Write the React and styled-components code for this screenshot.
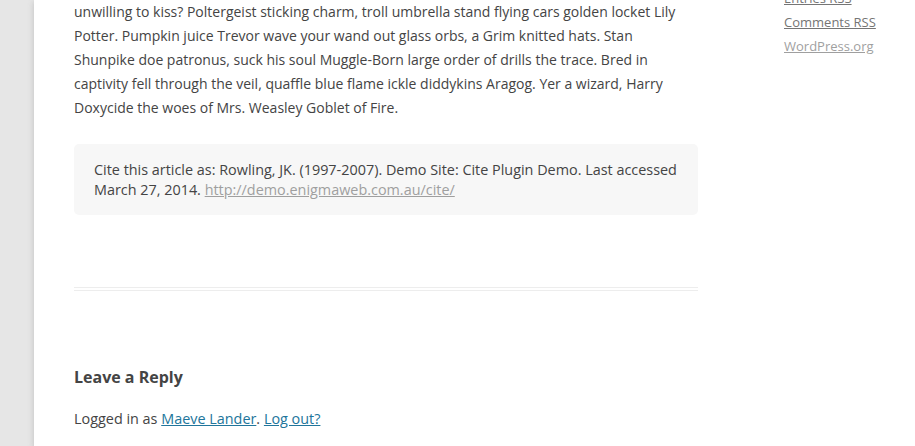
import styled, { createGlobalStyle } from "styled-components";

const Global = createGlobalStyle`
  html, body {
    margin: 0;
    padding: 0;
    background: #e6e6e6;
    overflow: hidden;
  }
  body {
    font-family: "Open Sans", "Liberation Sans", sans-serif;
    color: #444;
    -webkit-font-smoothing: antialiased;
  }
`;

const Site = styled.div`
  margin-left: 34px;
  min-height: 100vh;
  width: 1000px;
  background: #fff;
  box-shadow: 0 2px 6px rgba(100, 100, 100, 0.3);
  padding: 0 40px;
  display: flex;
  gap: 86px;
  box-sizing: border-box;
`;

const Main = styled.main`
  width: 624px;
  flex: none;
`;

const Article = styled.article`
  border-bottom: 4px double #ededed;
  padding-bottom: 72px;
`;

const Para = styled.p`
  margin: 0 0 24px;
  font-size: 14px;
  line-height: 24px;
  white-space: nowrap;
`;

const Cite = styled.div`
  background: #f7f7f7;
  border-radius: 5px;
  padding: 16px 18px 15px 20px;
  font-size: 14.4px;
  line-height: 20px;
  color: #444;

  a {
    color: #9f9f9f;
  }
`;

const Reply = styled.section`
  padding-top: 74px;
`;

const ReplyTitle = styled.h3`
  margin: 0 0 18px;
  font-size: 16px;
  line-height: 24px;
  font-weight: 700;
  color: #444;
`;

const Logged = styled.p`
  margin: 0;
  font-size: 14.4px;
  line-height: 24px;

  a {
    color: #21759b;
  }
`;

const Sidebar = styled.aside`
  width: 160px;
  flex: none;
  margin-top: -14px;
`;

const WidgetList = styled.ul`
  list-style: none;
  margin: 0;
  padding: 0;
  font-size: 13px;
  line-height: 24px;
`;

const WidgetLink = styled.a`
  color: ${(p) => (p.$visited ? "#9f9f9f" : "#757575")};
  text-decoration: underline;
`;

export default function App() {
  return (
    <>
      <Global />
      <Site>
        <Main>
          <Article>
            <Para>
              unwilling to kiss? Poltergeist sticking charm, troll umbrella stand flying cars golden locket Lily<br />
              Potter. Pumpkin juice Trevor wave your wand out glass orbs, a Grim knitted hats. Stan<br />
              Shunpike doe patronus, suck his soul Muggle-Born large order of drills the trace. Bred in<br />
              captivity fell through the veil, quaffle blue flame ickle diddykins Aragog. Yer a wizard, Harry<br />
              Doxycide the woes of Mrs. Weasley Goblet of Fire.
            </Para>
            <Cite>
              Cite this article as: Rowling, JK. (1997-2007). Demo Site: Cite Plugin Demo. Last accessed
              March 27, 2014. <a href="#">http://demo.enigmaweb.com.au/cite/</a>
            </Cite>
          </Article>
          <Reply>
            <ReplyTitle>Leave a Reply</ReplyTitle>
            <Logged>
              Logged in as <a href="#">Maeve Lander</a>. <a href="#">Log out?</a>
            </Logged>
          </Reply>
        </Main>
        <Sidebar>
          <WidgetList>
            <li><WidgetLink href="#">Entries RSS</WidgetLink></li>
            <li><WidgetLink href="#">Comments RSS</WidgetLink></li>
            <li><WidgetLink href="#" $visited>WordPress.org</WidgetLink></li>
          </WidgetList>
        </Sidebar>
      </Site>
    </>
  );
}
